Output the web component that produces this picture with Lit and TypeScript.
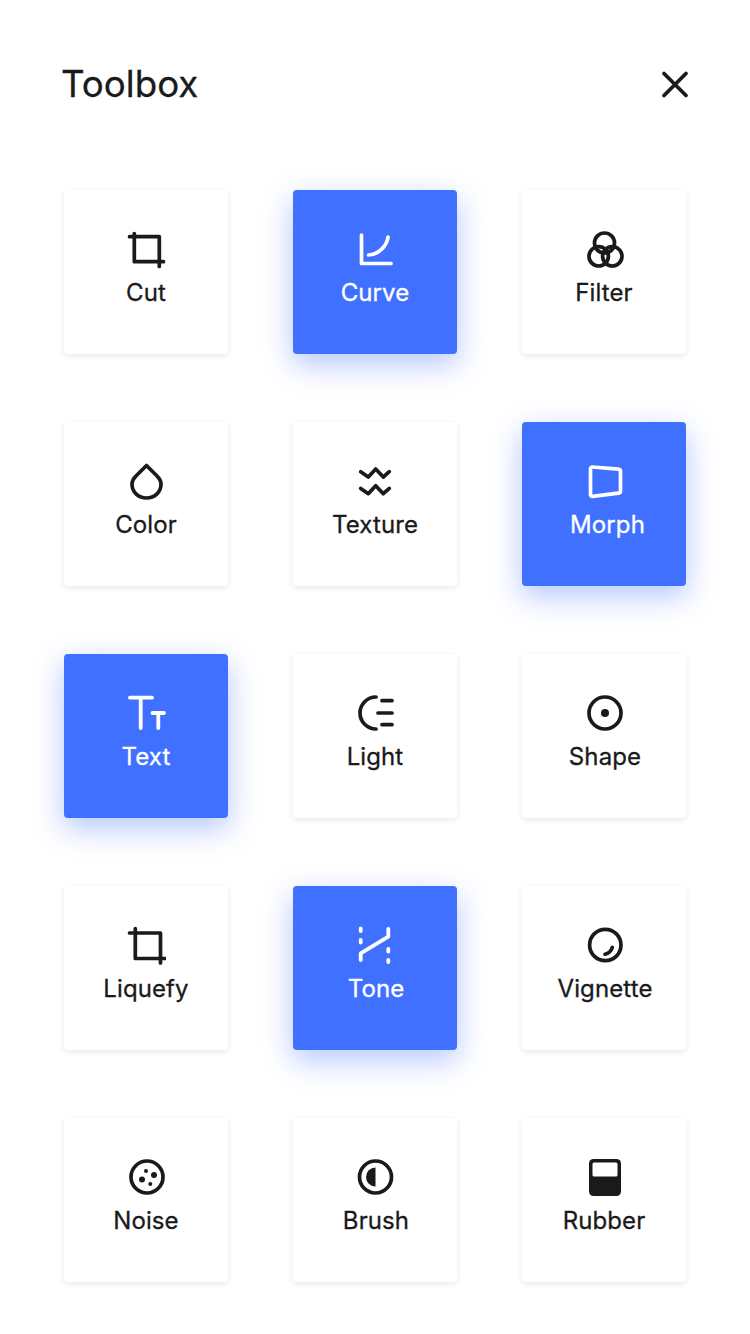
import { LitElement, html, css, svg } from "lit";
import { customElement } from "lit/decorators.js";

const icons: Record<string, unknown> = {
  cut: svg`<path d="M8.3 3.5V31.7H37.5M3.5 6.7H33.3V36.5"/>`,
  curve: svg`<path d="M6.5 5V33.5H36M13.5 25C23 25 32 16 33 7"/>`,
  filter: svg`<circle cx="20.5" cy="13" r="10"/><circle cx="14.7" cy="26.3" r="9.7"/><circle cx="28.3" cy="26.3" r="9.7"/>`,
  color: svg`<path d="M20.5 3.5L10.2 13.8C7.3 16.4 6 19 6 22.3C6 30.2 12.5 36 20.5 36C28.5 36 35 30.2 35 22.3C35 19 33.7 16.4 30.8 13.8Z"/>`,
  texture: svg`<path d="M5.7 9.7L13.3 15L20.7 7L28.3 15L34.3 9.7M5.7 26.4L13.3 31.7L20.7 23.7L28.3 31.7L34.3 26.4"/>`,
  morph: svg`<path d="M8.5 5L34.5 7.2Q36.5 7.4 36.5 9.4V29Q36.5 30.9 34.5 31.1L8.5 34.3Q6.5 34.5 6.5 32.5V7Q6.5 4.9 8.5 5Z"/>`,
  text: svg`<path stroke-width="3.8" d="M4 3.7H26M14.7 3.7V34M26.5 19H38M32.3 19V34"/>`,
  light: svg`<path d="M21 3A16 16 0 0 0 21 35M27 6.7H37M23 19H37M27 30.7H37"/>`,
  shape: svg`<circle cx="21" cy="19" r="16"/><circle class="fill" cx="21" cy="19" r="4"/>`,
  liquefy: svg`<path d="M9.3 2.5V32.5H39M3.5 7H34.5V37"/>`,
  tone: svg`<path stroke-width="3.8" d="M5.7 34V27.3L33.3 10.7V3M5.7 2.5V5M5.7 14V16.5M33.3 23V25.5M33.3 34V36"/>`,
  vignette: svg`<circle cx="21.3" cy="19" r="15.7"/><path d="M21 28.3Q26.5 27 28.3 21.5"/>`,
  noise: svg`<circle cx="21" cy="19" r="16"/><g class="fill"><circle cx="20" cy="13" r="2"/><circle cx="28" cy="17" r="3"/><circle cx="16" cy="21.5" r="3"/><circle cx="24.3" cy="26" r="2"/></g>`,
  brush: svg`<circle cx="20.5" cy="19" r="16"/><path class="fill" d="M20.5 9.5A9.5 9.5 0 0 0 20.5 28.5Z"/>`,
  rubber: svg`<rect class="fill" x="5" y="1" width="32" height="37" rx="4.5"/><rect class="hole" x="8.5" y="4.5" width="25" height="14" rx="1.5"/>`,
};

const tools = [
  ["Cut", "cut", false, 0], ["Curve", "curve", true, 0], ["Filter", "filter", false, 0],
  ["Color", "color", false, 0], ["Texture", "texture", false, 0], ["Morph", "morph", true, 7],
  ["Text", "text", true, 0], ["Light", "light", false, 0], ["Shape", "shape", false, 2],
  ["Liquefy", "liquefy", false, 0], ["Tone", "tone", true, 2], ["Vignette", "vignette", false, 2],
  ["Noise", "noise", false, 0], ["Brush", "brush", false, 2], ["Rubber", "rubber", false, 0],
] as const;

@customElement("app-root")
export class AppRoot extends LitElement {
  static styles = css`
    :host {
      display: block;
      width: 750px;
      height: 1334px;
      background: #fff;
      color: #1a1a1a;
      font-family: Inter, "Liberation Sans", sans-serif;
      overflow: hidden;
    }
    .head {
      display: flex;
      justify-content: space-between;
      align-items: center;
      height: 48px;
      padding: 60px 60px 2px 61px;
    }
    h1 {
      margin: 0;
      font-size: 36.7px;
      font-weight: 400;
      line-height: 48px;
      -webkit-text-stroke: 0.3px currentColor;
    }
    .close { width: 30px; height: 30px; display: block; margin-top: 2px; }
    .close path { fill: none; stroke: currentColor; stroke-width: 3.8; stroke-linecap: round; }
    .grid {
      display: grid;
      grid-template-columns: repeat(3, 164px);
      grid-auto-rows: 164px;
      column-gap: 65px;
      row-gap: 68px;
      padding: 80px 0 0 64px;
    }
    .card {
      display: flex;
      flex-direction: column;
      align-items: center;
      padding-top: 40px;
      box-sizing: border-box;
      border-radius: 4px;
      background: #fff;
      box-shadow: 0 2px 6px rgba(0, 0, 0, 0.09);
    }
    .card.on {
      background: #4070ff;
      color: #fff;
      box-shadow: 0 10px 30px rgba(64, 112, 255, 0.4);
    }
    .icon {
      width: 40px;
      height: 40px;
      display: block;
      fill: none;
      stroke: currentColor;
      stroke-width: 3.7;
      stroke-linecap: round;
      stroke-linejoin: round;
    }
    .icon .fill { fill: currentColor; stroke: none; }
    .icon .hole { fill: #fff; stroke: none; }
    .label {
      font-size: 24px;
      font-weight: 400;
      line-height: 46px;
      letter-spacing: 0.1px;
      -webkit-text-stroke: 0.3px currentColor;
    }
  `;

  render() {
    return html`
      <div class="head">
        <h1>Toolbox</h1>
        <svg class="close" viewBox="0 0 30 30"><path d="M4 3.5L26 25.5M26 3.5L4 25.5"/></svg>
      </div>
      <div class="grid">
        ${tools.map(([name, icon, on, shift]) => html`
          <div class="card ${on ? "on" : ""}">
            <svg class="icon" viewBox="0 0 40 40">${icons[icon]}</svg>
            <div class="label" style="padding-left:${shift}px">${name}</div>
          </div>`)}
      </div>
    `;
  }
}
